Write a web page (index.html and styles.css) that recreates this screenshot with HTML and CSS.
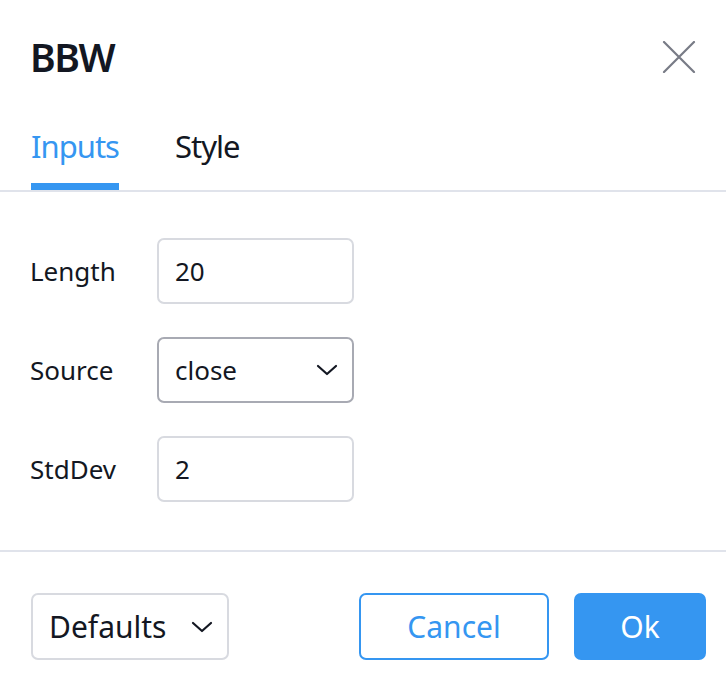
FILE: index.html
```html
<!DOCTYPE html>
<html>
<head>
<meta charset="utf-8">
<link rel="stylesheet" href="styles.css">
</head>
<body>
<div class="dialog">
  <div class="header">
    <div class="title">BBW</div>
    <button class="close" aria-label="Close">
      <svg width="34" height="32" viewBox="0 0 34 32"><path d="M2 1 L32 31 M32 1 L2 31" stroke="#787b86" stroke-width="2.2" stroke-linecap="round" fill="none"/></svg>
    </button>
  </div>
  <div class="tabs">
    <div class="tab active">Inputs</div>
    <div class="tab">Style</div>
  </div>
  <div class="content">
    <div class="row">
      <div class="label">Length</div>
      <div class="field">20</div>
    </div>
    <div class="row">
      <div class="label">Source</div>
      <div class="field select">
        <span>close</span>
        <svg width="22" height="12" viewBox="0 0 22 12"><path d="M2 2 L11 10 L20 2" stroke="#131722" stroke-width="2.2" fill="none" stroke-linecap="round" stroke-linejoin="round"/></svg>
      </div>
    </div>
    <div class="row">
      <div class="label">StdDev</div>
      <div class="field">2</div>
    </div>
  </div>
  <div class="footer">
    <div class="defaults">
      <span>Defaults</span>
      <svg width="22" height="12" viewBox="0 0 22 12"><path d="M2 2 L11 10 L20 2" stroke="#131722" stroke-width="2.2" fill="none" stroke-linecap="round" stroke-linejoin="round"/></svg>
    </div>
    <div class="actions">
      <button class="btn cancel">Cancel</button>
      <button class="btn ok">Ok</button>
    </div>
  </div>
</div>
</body>
</html>
```
FILE: styles.css
```css
html, body {
  margin: 0;
  padding: 0;
  background: #ffffff;
}
body {
  font-family: "Noto Sans", "Open Sans", sans-serif;
  color: #131722;
}
.dialog {
  width: 726px;
  height: 686px;
  display: flex;
  flex-direction: column;
}
.header {
  display: flex;
  justify-content: space-between;
  align-items: center;
  padding: 32px 31px 0 31px;
  height: 50px;
}
.title {
  font-size: 39px;
  font-weight: 600;
  line-height: 50px;
  letter-spacing: -1.5px;
  margin-left: -1px;
}
.close {
  border: none;
  background: none;
  padding: 0;
  margin-right: -1px;
  width: 34px;
  height: 32px;
  display: flex;
}
.tabs {
  display: flex;
  gap: 56px;
  margin-top: 30px;
  padding: 0 31px;
  border-bottom: 2px solid #e0e3eb;
}
.tab {
  font-size: 31px;
  line-height: 40px;
  letter-spacing: -1px;
  padding-top: 14px;
  padding-bottom: 17px;
  border-bottom: 7px solid transparent;
}
.tab.active {
  color: #3596f1;
  border-bottom-color: #3596f1;
}
.content {
  padding: 46px 31px 48px 30px;
  display: flex;
  flex-direction: column;
  gap: 33px;
  border-bottom: 2px solid #e0e3eb;
}
.row {
  display: flex;
  align-items: center;
  height: 66px;
}
.label {
  width: 127px;
  font-size: 26px;
}
.field {
  box-sizing: border-box;
  width: 197px;
  height: 66px;
  border: 2px solid #d8dae0;
  border-radius: 7px;
  padding: 0 16px;
  font-size: 26px;
  display: flex;
  align-items: center;
}
.field.select {
  border-color: #a8aab3;
  justify-content: space-between;
  padding-right: 14px;
}
.footer {
  display: flex;
  justify-content: space-between;
  align-items: center;
  padding: 41px 20px 0 31px;
}
.defaults {
  box-sizing: border-box;
  width: 198px;
  height: 67px;
  border: 2px solid #d8dae0;
  border-radius: 7px;
  display: flex;
  align-items: center;
  justify-content: space-between;
  padding: 0 14px 0 16px;
  font-size: 30px;
}
.actions {
  display: flex;
  gap: 25px;
}
.btn {
  box-sizing: border-box;
  height: 67px;
  border-radius: 7px;
  font-family: inherit;
  font-size: 30px;
  padding: 0;
}
.cancel {
  width: 190px;
  background: #ffffff;
  border: 2px solid #3596f1;
  color: #3596f1;
}
.ok {
  width: 132px;
  background: #3596f1;
  border: 2px solid #3596f1;
  color: #ffffff;
}
```
